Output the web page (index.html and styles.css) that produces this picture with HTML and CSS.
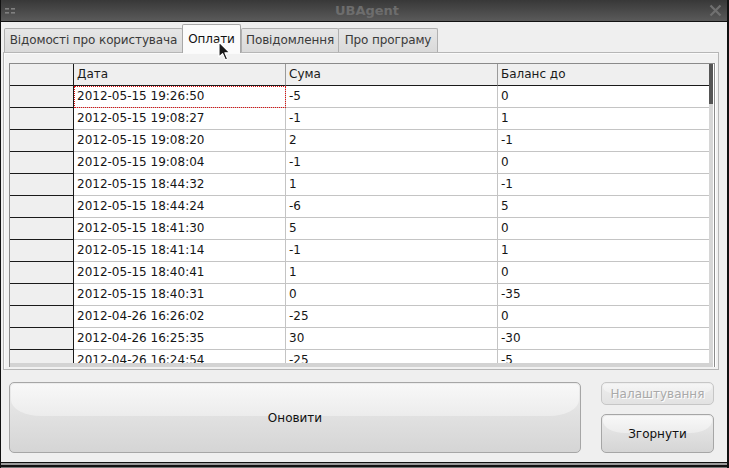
FILE: index.html
```html
<!DOCTYPE html>
<html>
<head>
<meta charset="utf-8">
<link rel="stylesheet" href="styles.css">
</head>
<body>
<div class="window">
  <div class="titlebar">
    <svg class="grip" width="12" height="8" viewBox="0 0 12 8"><rect x="0" y="1" width="4" height="1.6" fill="#808080"/><rect x="6" y="1" width="4" height="1.6" fill="#808080"/><rect x="0" y="5" width="4" height="1.6" fill="#808080"/><rect x="6" y="5" width="4" height="1.6" fill="#808080"/></svg>
    <div class="title">UBAgent</div>
    <svg class="close" width="13" height="13" viewBox="0 0 13 13"><path d="M1.5 1.5 L11.5 11.5 M11.5 1.5 L1.5 11.5" stroke="#707070" stroke-width="2.2" fill="none"/></svg>
  </div>
  <div class="tabbar">
    <div class="tab t1">Відомості про користувача</div>
    <div class="tab t2 active">Оплати</div>
    <div class="tab t3">Повідомлення</div>
    <div class="tab t4">Про програму</div>
  </div>
  <div class="panel">
    <div class="frame">
      <div class="grid">
        <div class="row head">
          <div class="vh"></div>
          <div class="c c1">Дата</div>
          <div class="c c2">Сума</div>
          <div class="c c3">Баланс до</div>
        </div>
        <div class="body">
          <div class="row"><div class="vh"></div><div class="c c1 focus">2012-05-15 19:26:50</div><div class="c c2">-5</div><div class="c c3">0</div></div>
          <div class="row"><div class="vh"></div><div class="c c1">2012-05-15 19:08:27</div><div class="c c2">-1</div><div class="c c3">1</div></div>
          <div class="row"><div class="vh"></div><div class="c c1">2012-05-15 19:08:20</div><div class="c c2">2</div><div class="c c3">-1</div></div>
          <div class="row"><div class="vh"></div><div class="c c1">2012-05-15 19:08:04</div><div class="c c2">-1</div><div class="c c3">0</div></div>
          <div class="row"><div class="vh"></div><div class="c c1">2012-05-15 18:44:32</div><div class="c c2">1</div><div class="c c3">-1</div></div>
          <div class="row"><div class="vh"></div><div class="c c1">2012-05-15 18:44:24</div><div class="c c2">-6</div><div class="c c3">5</div></div>
          <div class="row"><div class="vh"></div><div class="c c1">2012-05-15 18:41:30</div><div class="c c2">5</div><div class="c c3">0</div></div>
          <div class="row"><div class="vh"></div><div class="c c1">2012-05-15 18:41:14</div><div class="c c2">-1</div><div class="c c3">1</div></div>
          <div class="row"><div class="vh"></div><div class="c c1">2012-05-15 18:40:41</div><div class="c c2">1</div><div class="c c3">0</div></div>
          <div class="row"><div class="vh"></div><div class="c c1">2012-05-15 18:40:31</div><div class="c c2">0</div><div class="c c3">-35</div></div>
          <div class="row"><div class="vh"></div><div class="c c1">2012-04-26 16:26:02</div><div class="c c2">-25</div><div class="c c3">0</div></div>
          <div class="row"><div class="vh"></div><div class="c c1">2012-04-26 16:25:35</div><div class="c c2">30</div><div class="c c3">-30</div></div>
          <div class="row"><div class="vh"></div><div class="c c1">2012-04-26 16:24:54</div><div class="c c2">-25</div><div class="c c3">-5</div></div>
        </div>
      </div>
      <div class="scrollbar"><div class="thumb"></div></div>
    </div>
  </div>
  <div class="buttons">
    <div class="btn big">Оновити</div>
    <div class="side">
      <div class="btn small disabled">Налаштування</div>
      <div class="btn mid">Згорнути</div>
    </div>
  </div>
  <div class="bottom"></div>
  <svg class="cursor" width="14" height="21" viewBox="0 0 14 21"><path d="M1 1 L1 16 L4.6 12.6 L7.4 19 L9.6 18 L6.9 11.8 L11.8 11.8 Z" fill="#1a1a1a" stroke="#ffffff" stroke-width="1.1" stroke-linejoin="round"/></svg>
</div>
</body>
</html>
```

FILE: styles.css
```css
* { box-sizing: border-box; }
html, body { margin: 0; padding: 0; }
body {
  width: 729px;
  height: 468px;
  overflow: hidden;
  background: #efefef;
  font-family: "DejaVu Sans", "Noto Sans", sans-serif;
  font-size: 12px;
  color: #141414;
}
.window {
  position: relative;
  width: 729px;
  height: 468px;
  border-left: 1px solid #111;
  border-right: 2px solid #111;
  display: flex;
  flex-direction: column;
  background: #efefef;
}
.titlebar {
  height: 22px;
  flex: none;
  background: linear-gradient(#383838, #5a5a5a);
  border-bottom: 1px solid #111;
  display: flex;
  align-items: center;
  padding: 0 5px 0 4px;
}
.grip { flex: none; margin-top: 1px; }
.title {
  flex: 1;
  text-align: center;
  font-weight: bold;
  font-size: 13px;
  color: #6d6d6d;
  padding-left: 8px;
}
.close { flex: none; margin-top: -1px; }
.tabbar {
  height: 30px;
  flex: none;
  display: flex;
  align-items: flex-end;
  padding-left: 3px;
  position: relative;
  z-index: 2;
}
.tab {
  height: 24px;
  padding: 0;
  text-align: center;
  letter-spacing: -0.12px;
  line-height: 22px;
  font-size: 12px;
  color: #3a3a3a;
  background: linear-gradient(#e6e6e6, #dadada);
  border: 1px solid #b0b0b0;
  border-bottom: none;
  border-radius: 2px 2px 0 0;
  margin-right: -1px;
  white-space: nowrap;
  overflow: visible;
}
.t1 { width: 179px; }
.t2 { width: 59px; }
.t3 { width: 98px; }
.t4 { width: 100px; }
.tab.active {
  height: 29px;
  margin-bottom: -1px;
  padding-top: 3px;
  background: #fbfbfb;
  color: #111;
  border-color: #a8a8a8;
  position: relative;
  z-index: 3;
  margin-right: 0;
}
.panel {
  height: 318px;
  flex: none;
  margin-left: 2px;
  width: 716px;
  border: 1px solid #b6b6b6;
  background: #f1f1f1;
  box-shadow: inset 1px 1px 0 #fafafa;
  padding: 10px 3px 2px 5px;
}
.frame {
  height: 304px;
  display: flex;
  border: 1px solid #8a8a8a;
  border-bottom: none;
  box-shadow: 1px 0 0 #ffffff;
  background: #fff;
}
.grid {
  width: 699px;
  display: flex;
  flex-direction: column;
  border-bottom: 4px solid #d3d3d3;
}
.row {
  display: flex;
  height: 22px;
  flex: none;
}
.head .c, .head .vh { background: #efefef; border-bottom: 1px solid #1a1a1a; }
.head .c { border-right: 1px solid #9a9a9a; color: #1a1a1a; }
.head .c3 { border-right: none; }
.body { flex: 1; overflow: hidden; }
.vh {
  width: 64px;
  flex: none;
  background: #efefef;
  border-right: 1px solid #1a1a1a;
  border-bottom: 1px solid #1a1a1a;
}
.c {
  flex: none;
  padding-left: 3px;
  line-height: 21px;
  border-right: 1px solid #c4c4c4;
  border-bottom: 1px solid #c4c4c4;
  white-space: nowrap;
  color: #151515;
}
.c1 { width: 212px; }
.c2 { width: 212px; }
.c3 { width: 211px; border-right: none; }
.focus { outline: 1px dotted #e01010; outline-offset: -1px; }
.scrollbar {
  width: 4px;
  flex: none;
  background: #d6d6d6;
  border-bottom: 4px solid #d3d3d3;
}
.thumb { height: 40px; background: #555; }
.buttons {
  flex: none;
  height: 71px;
  margin-top: 12px;
  display: flex;
  padding-left: 8px;
  gap: 20px;
}
.btn {
  position: relative;
  isolation: isolate;
  display: flex;
  align-items: center;
  justify-content: center;
  border: 1px solid #a6a6a6;
  border-radius: 5px;
  background: linear-gradient(#ececec, #d5d5d5);
  color: #111;
  font-size: 12px;
  overflow: hidden;
}
.btn::before {
  content: "";
  position: absolute;
  z-index: -1;
  left: 1px;
  right: 1px;
  top: 1px;
  height: 46%;
  border-radius: 4px 4px 22px 22px / 4px 4px 12px 12px;
  background: linear-gradient(#f8f8f8, #ececec);
}
.big { width: 572px; height: 71px; }
.big::before { height: 47%; border-radius: 4px 4px 30px 30px / 4px 4px 16px 16px; }
.side {
  width: 113px;
  display: flex;
  flex-direction: column;
  gap: 9px;
}
.small { height: 23px; }
.mid { height: 39px; }
.disabled {
  color: #a9a9a9;
  text-shadow: 1px 1px 0 #fff;
  border-color: #c6c6c6;
  background: linear-gradient(#eeeeee, #e2e2e2);
}
.disabled::before { background: linear-gradient(#f5f5f5, #eeeeee); }
.bottom {
  flex: none;
  height: 6px;
  margin-top: 9px;
  border-top: 1px solid #111;
  background: linear-gradient(#9a9a9a 0, #9a9a9a 2px, #111 2px, #111 4px, #777 4px);
}
.cursor {
  position: absolute;
  left: 217px;
  top: 41px;
  z-index: 10;
}
```
